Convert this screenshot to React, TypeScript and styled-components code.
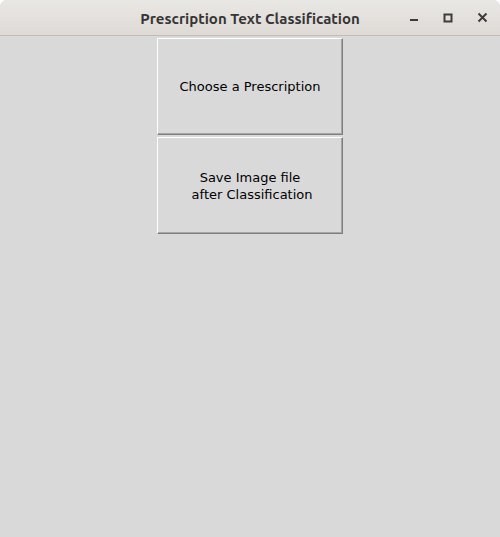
import React from "react";
import styled, { createGlobalStyle } from "styled-components";

const Global = createGlobalStyle`
  html, body { margin: 0; padding: 0; background: #ffffff; }
  #root { width: 500px; height: 537px; }
`;

const Window = styled.div`
  width: 500px;
  height: 537px;
  display: flex;
  flex-direction: column;
  background: #d9d9d9;
  border-radius: 7px 7px 0 0;
  overflow: hidden;
`;

const TitleBar = styled.div`
  height: 35px;
  flex: none;
  display: flex;
  align-items: center;
  justify-content: center;
  position: relative;
  background: linear-gradient(#e9e7e4, #dedad6);
  border-bottom: 1px solid #c3bcb3;
`;

const Title = styled.div`
  font-family: "Ubuntu", "Open Sans", "DejaVu Sans", sans-serif;
  font-weight: 700;
  font-size: 15px;
  color: #353535;
  padding-top: 2px;
`;

const Controls = styled.div`
  position: absolute;
  right: 1px;
  top: 0;
  height: 35px;
  display: flex;
  align-items: center;
`;

const Ctrl = styled.div`
  width: 34px;
  height: 35px;
  display: flex;
  align-items: center;
  justify-content: center;
`;

const Content = styled.div`
  flex: 1;
  display: flex;
  flex-direction: column;
  align-items: center;
  padding-top: 1px;
`;

const TkButton = styled.div`
  box-sizing: border-box;
  width: 186px;
  height: 97px;
  margin: 1px;
  display: flex;
  align-items: center;
  justify-content: center;
  text-align: center;
  white-space: pre;
  background: #d9d9d9;
  border-top: 1px solid #ffffff;
  border-left: 1px solid #ffffff;
  border-right: 1px solid #7e7e7e;
  border-bottom: 1px solid #7e7e7e;
  box-shadow: inset -1px -1px 0 #a6a6a6;
  font-family: "DejaVu Sans", sans-serif;
  font-size: 13px;
  line-height: 17px;
  color: #000000;
`;

export default function App() {
  return (
    <>
      <Global />
      <Window>
        <TitleBar>
          <Title>Prescription Text Classification</Title>
          <Controls>
            <Ctrl>
              <svg width="10" height="10" viewBox="0 0 10 10">
                <rect x="1" y="6" width="8" height="2" fill="#3c3c3c" />
              </svg>
            </Ctrl>
            <Ctrl>
              <svg width="10" height="10" viewBox="0 0 10 10">
                <rect x="1.5" y="1.5" width="7" height="7" fill="none" stroke="#3c3c3c" strokeWidth="2" />
              </svg>
            </Ctrl>
            <Ctrl>
              <svg width="11" height="11" viewBox="0 0 11 11">
                <path d="M1.5 1.5 L9.5 9.5 M9.5 1.5 L1.5 9.5" stroke="#3c3c3c" strokeWidth="2" />
              </svg>
            </Ctrl>
          </Controls>
        </TitleBar>
        <Content>
          <TkButton>Choose a Prescription</TkButton>
          <TkButton>{"Save Image file\n after Classification"}</TkButton>
        </Content>
      </Window>
    </>
  );
}
